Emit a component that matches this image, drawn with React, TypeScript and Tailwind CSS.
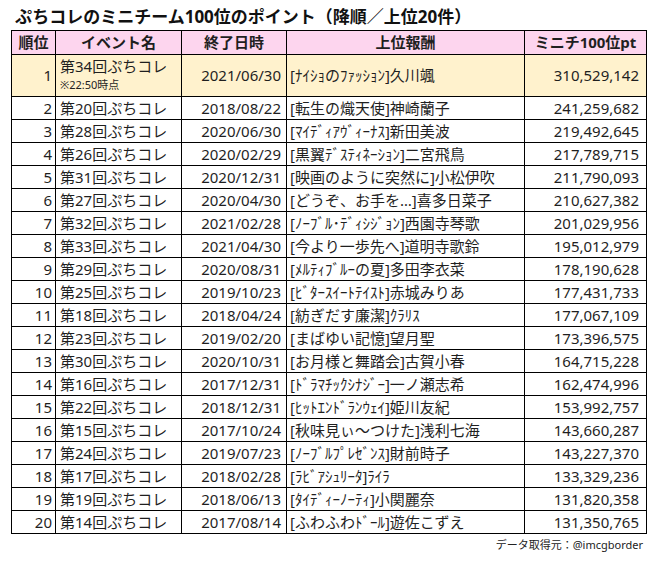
const rows = [
  ['1', '第34回ぷちコレ', '2021/06/30', '[ﾅｲｼｮのﾌｧｯｼｮﾝ]久川颯', '310,529,142'],
  ['2', '第20回ぷちコレ', '2018/08/22', '[転生の熾天使]神崎蘭子', '241,259,682'],
  ['3', '第28回ぷちコレ', '2020/06/30', '[ﾏｲﾃﾞｨｱｳﾞｨｰﾅｽ]新田美波', '219,492,645'],
  ['4', '第26回ぷちコレ', '2020/02/29', '[黒翼ﾃﾞｽﾃｨﾈｰｼｮﾝ]二宮飛鳥', '217,789,715'],
  ['5', '第31回ぷちコレ', '2020/12/31', '[映画のように突然に]小松伊吹', '211,790,093'],
  ['6', '第27回ぷちコレ', '2020/04/30', '[どうぞ、お手を…]喜多日菜子', '210,627,382'],
  ['7', '第32回ぷちコレ', '2021/02/28', '[ﾉｰﾌﾞﾙ･ﾃﾞｨｼｼﾞｮﾝ]西園寺琴歌', '201,029,956'],
  ['8', '第33回ぷちコレ', '2021/04/30', '[今より一歩先へ]道明寺歌鈴', '195,012,979'],
  ['9', '第29回ぷちコレ', '2020/08/31', '[ﾒﾙﾃｨﾌﾞﾙｰの夏]多田李衣菜', '178,190,628'],
  ['10', '第25回ぷちコレ', '2019/10/23', '[ﾋﾞﾀｰｽｲｰﾄﾃｲｽﾄ]赤城みりあ', '177,431,733'],
  ['11', '第18回ぷちコレ', '2018/04/24', '[紡ぎだす廉潔]ｸﾗﾘｽ', '177,067,109'],
  ['12', '第23回ぷちコレ', '2019/02/20', '[まばゆい記憶]望月聖', '173,396,575'],
  ['13', '第30回ぷちコレ', '2020/10/31', '[お月様と舞踏会]古賀小春', '164,715,228'],
  ['14', '第16回ぷちコレ', '2017/12/31', '[ﾄﾞﾗﾏﾁｯｸｼﾅｼﾞｰ]一ノ瀬志希', '162,474,996'],
  ['15', '第22回ぷちコレ', '2018/12/31', '[ﾋｯﾄｴﾝﾄﾞﾗﾝｳｪｲ]姫川友紀', '153,992,757'],
  ['16', '第15回ぷちコレ', '2017/10/24', '[秋味見ぃ～つけた]浅利七海', '143,660,287'],
  ['17', '第24回ぷちコレ', '2019/07/23', '[ﾉｰﾌﾞﾙﾌﾟﾚｾﾞﾝｽ]財前時子', '143,227,370'],
  ['18', '第17回ぷちコレ', '2018/02/28', '[ﾗﾋﾞｱｼｭﾘｰﾀ]ﾗｲﾗ', '133,329,236'],
  ['19', '第19回ぷちコレ', '2018/06/13', '[ﾀｲﾃﾞｨｰﾉｰﾃｨ]小関麗奈', '131,820,358'],
  ['20', '第14回ぷちコレ', '2017/08/14', '[ふわふわﾄﾞｰﾙ]遊佐こずえ', '131,350,765'],
];

const cell = 'border border-black p-0 whitespace-nowrap overflow-hidden';

export default function App() {
  return (
    <div className="bg-white min-h-screen w-[660px] h-[567px] pl-[11px] pt-[7px] text-[#1f1f1f] font-['Noto_Sans','Noto_Sans_CJK_JP',sans-serif]">
      {/* Title */}
      <h1 className="h-[23px] pl-[4px] text-[17px] font-bold leading-[20px] text-[#111]">
        ぷちコレのミニチーム100位のポイント（降順／上位20件）
      </h1>

      <table className="table-fixed border-collapse w-[635px] text-[15px]">
        <colgroup>
          <col className="w-[44px]" />
          <col className="w-[126px]" />
          <col className="w-[105px]" />
          <col className="w-[238px]" />
          <col className="w-[122px]" />
        </colgroup>
        <thead>
          <tr className="h-[23px] bg-[#fdd5ee] font-bold">
            <th className={`${cell} text-center font-bold`}>順位</th>
            <th className={`${cell} text-center font-bold`}>イベント名</th>
            <th className={`${cell} text-center font-bold`}>終了日時</th>
            <th className={`${cell} text-center font-bold`}>上位報酬</th>
            <th className={`${cell} text-center font-bold`}>ミニチ100位pt</th>
          </tr>
        </thead>
        <tbody>
          {rows.map((r, i) => (
            <tr key={r[0]} className={i === 0 ? 'h-[42px] bg-[#fff2cd]' : 'h-[23px]'}>
              <td className={`${cell} text-right pr-[3px] leading-[20px]`}>{r[0]}</td>
              <td className={`${cell} text-left pl-[4px] leading-[20px]`}>
                {i === 0 ? (
                  <div className="flex flex-col">
                    <span className="leading-[20px]">{r[1]}</span>
                    <span className="text-[11px] leading-[18px]">※22:50時点</span>
                  </div>
                ) : (
                  r[1]
                )}
              </td>
              <td className={`${cell} text-right pr-[5px] leading-[20px]`}>{r[2]}</td>
              <td className={`${cell} text-left pl-[3px] leading-[20px]`}>{r[3]}</td>
              <td className={`${cell} text-right pr-[7px] leading-[20px]`}>{r[4]}</td>
            </tr>
          ))}
        </tbody>
      </table>

      {/* Source */}
      <p className="w-[632px] pt-[3px] text-right text-[11px] leading-[16px] text-[#222]">
        データ取得元：@imcgborder
      </p>
    </div>
  );
}
